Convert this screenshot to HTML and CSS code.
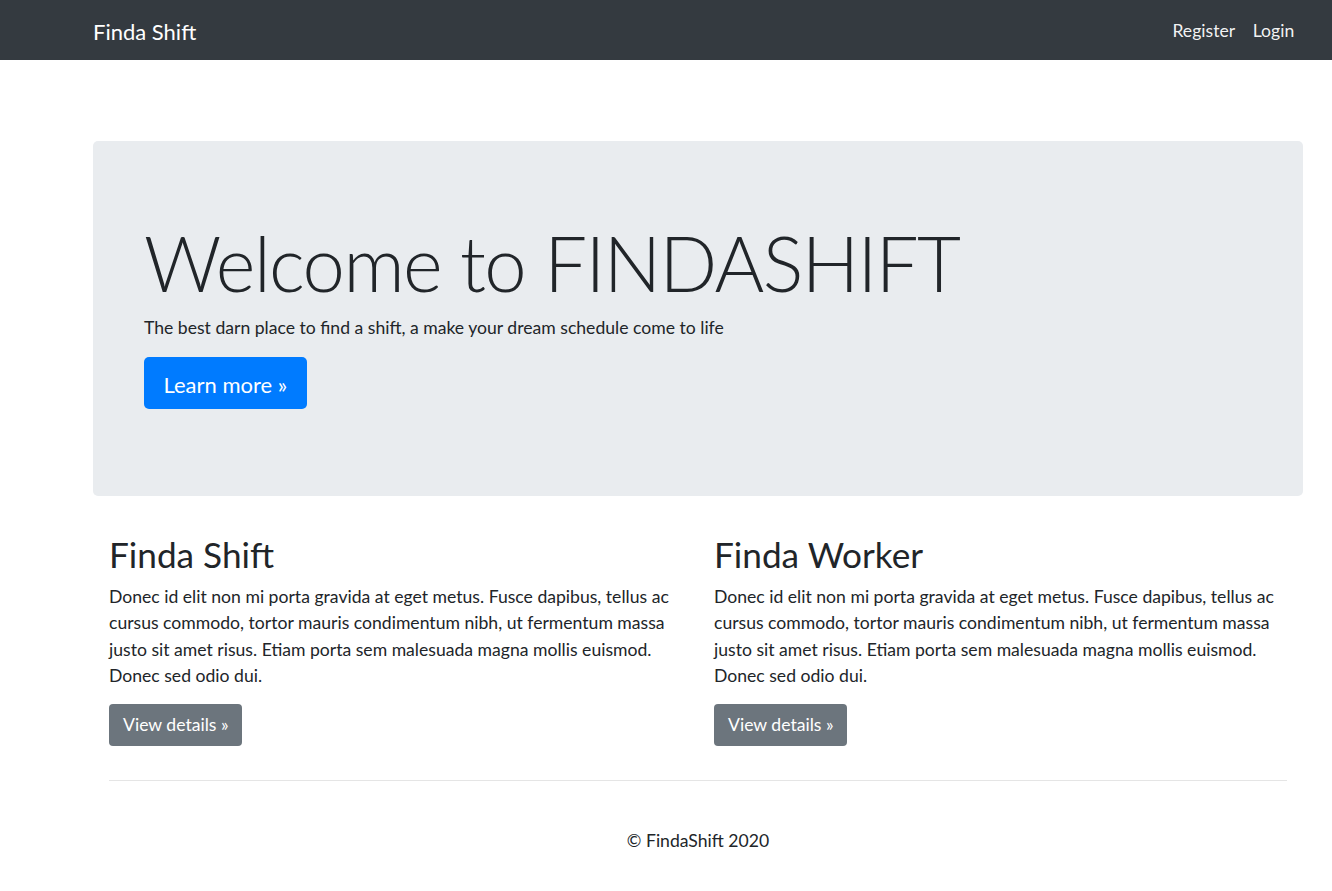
FILE: index.html
```html
<!DOCTYPE html>
<html lang="en">
<head>
<meta charset="utf-8">
<title>FindaShift</title>
<link rel="stylesheet" href="styles.css">
</head>
<body>
<nav class="navbar">
  <div class="container nav-inner">
    <a class="brand" href="#">Finda Shift</a>
    <ul class="nav-links">
      <li><a href="#">Register</a></li>
      <li><a href="#">Login</a></li>
    </ul>
  </div>
</nav>
<main class="main">
  <div class="container">
    <section class="jumbotron">
      <h1 class="display">Welcome to FINDASHIFT</h1>
      <p class="lead">The best darn place to find a shift, a make your dream schedule come to life</p>
      <a class="btn btn-primary" href="#">Learn more &raquo;</a>
    </section>
  </div>
  <div class="container inner">
    <div class="row">
      <div class="col">
        <h2>Finda Shift</h2>
        <p>Donec id elit non mi porta gravida at eget metus. Fusce dapibus, tellus ac cursus commodo, tortor mauris condimentum nibh, ut fermentum massa justo sit amet risus. Etiam porta sem malesuada magna mollis euismod. Donec sed odio dui.</p>
        <a class="btn btn-secondary" href="#">View details &raquo;</a>
      </div>
      <div class="col">
        <h2>Finda Worker</h2>
        <p>Donec id elit non mi porta gravida at eget metus. Fusce dapibus, tellus ac cursus commodo, tortor mauris condimentum nibh, ut fermentum massa justo sit amet risus. Etiam porta sem malesuada magna mollis euismod. Donec sed odio dui.</p>
        <a class="btn btn-secondary" href="#">View details &raquo;</a>
      </div>
    </div>
    <hr class="rule">
    <footer class="footer">&copy; FindaShift 2020</footer>
  </div>
</main>
</body>
</html>
```

FILE: styles.css
```css
* { box-sizing: border-box; }
html, body { margin: 0; padding: 0; }
body {
  font-family: "Lato", "Open Sans", sans-serif;
  font-size: 17.6px;
  line-height: 26.4px;
  color: #212529;
  background: #fff;
}
a { text-decoration: none; }
.container {
  width: 1210px;
  margin-left: 93px;
}
.navbar {
  background: #343a40;
  height: 60px;
}
.nav-inner {
  height: 60px;
  padding-top: 2px;
  display: flex;
  align-items: center;
  justify-content: space-between;
}
.brand {
  color: #fff;
  font-size: 22px;
  line-height: 33px;
}
.nav-links {
  list-style: none;
  margin: 0;
  padding: 0;
  display: flex;
}
.nav-links a {
  display: block;
  color: rgba(255,255,255,0.95);
  padding: 0 8.8px;
}
.main { padding-top: 81px; }
.jumbotron {
  background: #e9ecef;
  border-radius: 5px;
  padding: 74px 51px 0;
  height: 355px;
}
.display {
  margin: 0;
  font-size: 76px;
  line-height: 96px;
  font-weight: 300;
  letter-spacing: -1.6px;
}
.lead {
  margin: 4px 0 16px;
  font-size: 17.6px;
  line-height: 26px;
}
.btn {
  display: inline-block;
  color: #fff;
  border-radius: 4px;
}
.btn-primary {
  background: #007bff;
  font-size: 22px;
  line-height: 33px;
  padding: 10.5px 19.5px 8.5px;
  border-radius: 5px;
}
.btn-secondary {
  background: #6c757d;
  padding: 8.8px 14px 6.8px;
}
.inner { padding: 0 16px; }
.row {
  display: flex;
  margin: 0 -16px;
  padding-top: 37px;
}
.col {
  flex: 1 1 0;
  padding: 0 16px;
}
.col h2 {
  margin: 0 0 9px;
  font-size: 35.2px;
  line-height: 42px;
  font-weight: 400;
}
.col p {
  margin: 0 0 14px;
}
.rule {
  margin: 34px 0 0;
  border: 0;
  border-top: 1px solid #e5e5e5;
}
.footer {
  text-align: center;
  padding-top: 47px;
  padding-bottom: 28px;
}
```
